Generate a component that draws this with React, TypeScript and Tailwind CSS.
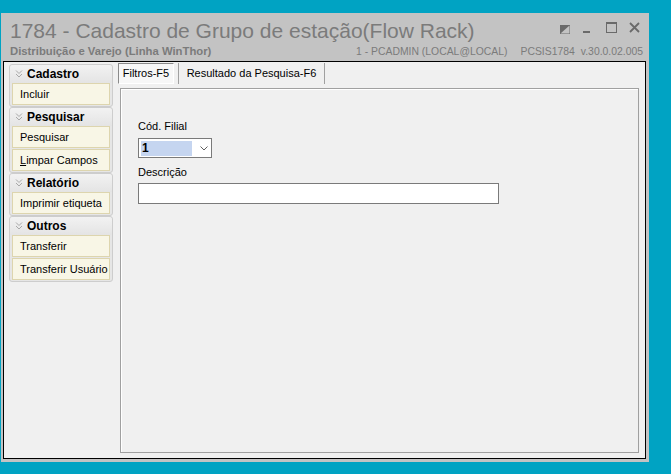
import React from "react";

const font = { fontFamily: '"Liberation Sans", Arial, sans-serif' };

function Chevrons() {
  return (
    <svg width="8" height="8" viewBox="0 0 8 8" className="shrink-0">
      <polyline points="1,0.5 4,3.5 7,0.5" fill="none" stroke="#a8a8a8" strokeWidth="1" />
      <polyline points="1,4 4,7 7,4" fill="none" stroke="#a8a8a8" strokeWidth="1" />
    </svg>
  );
}

function Item({ children }: { children: React.ReactNode }) {
  return (
    <div className="h-[22px] flex items-center pl-[7px] bg-[#f8f6e6] border border-[#ddd5ae] text-[11px] text-black leading-none">
      {children}
    </div>
  );
}

function Group({ title, items }: { title: string; items: React.ReactNode[] }) {
  return (
    <div className="border border-[#cdcdcd] rounded-[3px] bg-[#e6e6e6]">
      <div className="h-[18px] flex items-center gap-[4px] pl-[5px] bg-gradient-to-b from-[#f2f2f2] to-[#e4e4e4] rounded-t-[3px]">
        <Chevrons />
        <span className="text-[12px] font-bold text-black leading-none">{title}</span>
      </div>
      <div className="flex flex-col gap-[1px] px-[2px] pb-[1px]">
        {items.map((it, i) => (
          <Item key={i}>{it}</Item>
        ))}
      </div>
    </div>
  );
}

export default function App() {
  return (
    <div className="w-[671px] h-[474px] bg-[#00a3c3] overflow-hidden" style={font}>
      <div className="ml-[1px] pt-[13px] w-[648px]">
        <div className="w-[648px] h-[449px] bg-[#c3c3c3] flex flex-col">
          {/* Title area */}
          <div className="h-[48px] pl-[9px] pr-[6px] flex flex-col">
            <div className="flex justify-between items-start pt-[6px] h-[32px]">
              <div className="text-[21px] leading-[24px] text-[#7b7b7b] whitespace-nowrap">
                1784 - Cadastro de Grupo de estação(Flow Rack)
              </div>
              <div className="flex items-start pr-[3px] pt-[3px]">
                <svg width="11" height="11" viewBox="0 0 11 11" className="mt-[3px]">
                  <rect x="0.5" y="0.5" width="9" height="8" fill="none" stroke="#6a6a6a" />
                  <polygon points="0.5,8.5 9.5,0.5 9.5,8.5 0.5,8.5" fill="#c3c3c3" />
                  <polygon points="0.5,8.5 0.5,0.5 9.5,0.5" fill="#6a6a6a" />
                </svg>
                <svg width="8" height="11" viewBox="0 0 8 11" className="ml-[12px]">
                  <rect x="0" y="9" width="7" height="2" fill="#6a6a6a" />
                </svg>
                <svg width="11" height="11" viewBox="0 0 11 11" className="ml-[15px]">
                  <rect x="0.5" y="0.5" width="10" height="10" fill="none" stroke="#6a6a6a" />
                  <rect x="0" y="0" width="11" height="2" fill="#6a6a6a" />
                </svg>
                <svg width="11" height="11" viewBox="0 0 11 11" className="ml-[12px]">
                  <path d="M1 1 L10 10 M10 1 L1 10" stroke="#6a6a6a" strokeWidth="1.8" />
                </svg>
              </div>
            </div>
            <div className="flex justify-between items-center h-[13px] leading-[13px] text-[#7b7b7b] whitespace-nowrap">
              <span className="font-bold text-[11.3px]">Distribuição e Varejo (Linha WinThor)</span>
              <span className="text-[10.4px]">
                1 - PCADMIN (LOCAL@LOCAL)
                <span className="ml-[13px]">PCSIS1784</span>
                <span className="ml-[6px]">v.30.0.02.005</span>
              </span>
            </div>
          </div>

          {/* Inner frame */}
          <div className="ml-[2px] mr-[3px] h-[398px] border border-black bg-[#f0f0f0] flex">
            {/* Sidebar */}
            <div className="w-[104px] ml-[5px] pt-[2px] flex flex-col">
              <Group title="Cadastro" items={["Incluir"]} />
              <Group
                title="Pesquisar"
                items={[
                  "Pesquisar",
                  <span key="l">
                    <span className="underline">L</span>impar Campos
                  </span>,
                ]}
              />
              <Group title="Relatório" items={["Imprimir etiqueta"]} />
              <Group title="Outros" items={["Transferir", "Transferir Usuário"]} />
            </div>

            {/* Right side */}
            <div className="flex-1 ml-[5px] mr-[6px] pt-[1px] pb-[5px] flex flex-col">
              <div className="h-[21px] flex text-[11px] text-black leading-none">
                <div className="w-[56px] h-[21px] flex items-center justify-center border-t border-l border-[#8a8a8a] border-b-white border-r-white border-b border-r bg-[#f7f7f7]">
                  Filtros-F5
                </div>
                <div className="w-[5px] h-[21px] border-r border-[#a0a0a0]" />
                <div className="w-[146px] h-[21px] flex items-center justify-center border-r border-[#a0a0a0]">
                  Resultado da Pesquisa-F6
                </div>
              </div>
              <div className="mt-[4px] ml-[2px] flex-1 border border-[#a0a0a0] shadow-[inset_1px_1px_0_#ffffff] bg-[#f0f0f0] pl-[17px] pt-[31px] text-[11px] leading-[13px] text-black">
                <div>Cód. Filial</div>
                <div className="mt-[5px] w-[74px] h-[20px] border border-[#7a7a7a] bg-white flex items-center">
                  <div className="ml-[2px] w-[51px] h-[15px] bg-[#c5d5f0] flex items-center pl-[1px] font-bold text-[12px]">
                    1
                  </div>
                  <svg width="8" height="5" viewBox="0 0 8 5" className="ml-[8px]">
                    <polyline points="0.5,0.5 4,4 7.5,0.5" fill="none" stroke="#606060" strokeWidth="1" />
                  </svg>
                </div>
                <div className="mt-[8px]">Descrição</div>
                <div className="mt-[4px] w-[361px] h-[21px] border border-[#7a7a7a] bg-white" />
              </div>
            </div>
          </div>
        </div>
      </div>
    </div>
  );
}
